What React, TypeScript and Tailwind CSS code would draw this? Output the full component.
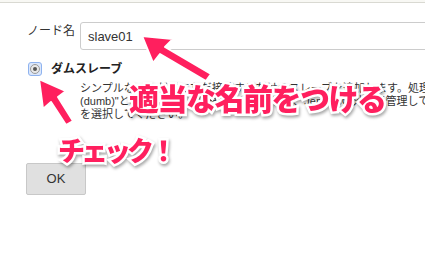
import React from "react";

const annot =
  "absolute font-['Noto_Sans_CJK_JP',sans-serif] font-black text-[#ff1f5e] whitespace-nowrap leading-none [paint-order:stroke_fill] [-webkit-text-stroke:5px_white] [filter:drop-shadow(1px_2px_1.5px_rgba(0,0,0,0.35))]";

function Arrow({ d }: { d: string }) {
  return (
    <path
      d={d}
      fill="#ff1f5e"
      stroke="white"
      strokeWidth="2"
      strokeLinejoin="round"
    />
  );
}

export default function App() {
  return (
    <div className="relative w-[425px] h-[270px] overflow-hidden bg-white text-[#333] font-['Liberation_Sans','Noto_Sans_CJK_JP',sans-serif]">
      <div className="h-[3px] bg-[#f8f8f4] border-b border-[#d9d9d2]" />
      <div className="flex items-start pt-[19px]">
        <div className="w-[75px] text-right text-[12px] leading-[16px] pt-[1px] text-[#333]">
          ノード名
        </div>
        <div className="ml-[5px] flex-1 -mr-[20px] h-[28px] border border-[#cccccc] rounded-[3px] flex items-center pl-[7px] pt-[2px] text-[13px]">
          slave01
        </div>
      </div>
      <div className="flex items-center pl-[28px] mt-[11px]">
        <div className="w-[14px] h-[14px] rounded-[3px] border border-[#8fb3ef] bg-[#dbe7fb] flex items-center justify-center">
          <div className="w-[10px] h-[10px] rounded-full bg-[#e8e8e8] border border-[#9a9a9a] flex items-center justify-center">
            <div className="w-[4px] h-[4px] rounded-full bg-[#555]" />
          </div>
        </div>
        <div className="ml-[9px] text-[12px] font-bold leading-[16px] text-[#222]">
          ダムスレーブ
        </div>
      </div>
      <div className="pl-[80px] mt-[5px] text-[11px] leading-[13px] whitespace-nowrap">
        <div>シンプルな、ただ単にただ接続するだけのスレーブを追加します。処理を行う</div>
        <div>(dumb)"と呼ばれます。物理コンピュータや、Jenkinsの外部で管理しているもの</div>
        <div>を選択してください。</div>
      </div>
      <div className="pl-[26px] mt-[42px]">
        <button className="w-[60px] h-[32px] bg-[#e0e0e0] border border-[#c8c8c8] rounded-[2px] text-[13px] text-[#333]">
          OK
        </button>
      </div>

      <svg className="absolute left-0 top-0" width="425" height="270">
        <Arrow d="M142 36 L173 39 L165 47 L211 74 L206 81 L160 54 L153 63 Z" />
        <Arrow d="M39 79 L43 109 L51 102 L66 125 L73 121 L58 97 L66 91 Z" />
      </svg>

      <div className={annot + " left-[129px] top-[82px] text-[30px] tracking-[-1.5px]"}>
        適当な名前をつける
      </div>
      <div className={annot + " left-[58px] top-[136px] text-[27px] tracking-[-4px]"}>
        チェック！
      </div>
    </div>
  );
}
